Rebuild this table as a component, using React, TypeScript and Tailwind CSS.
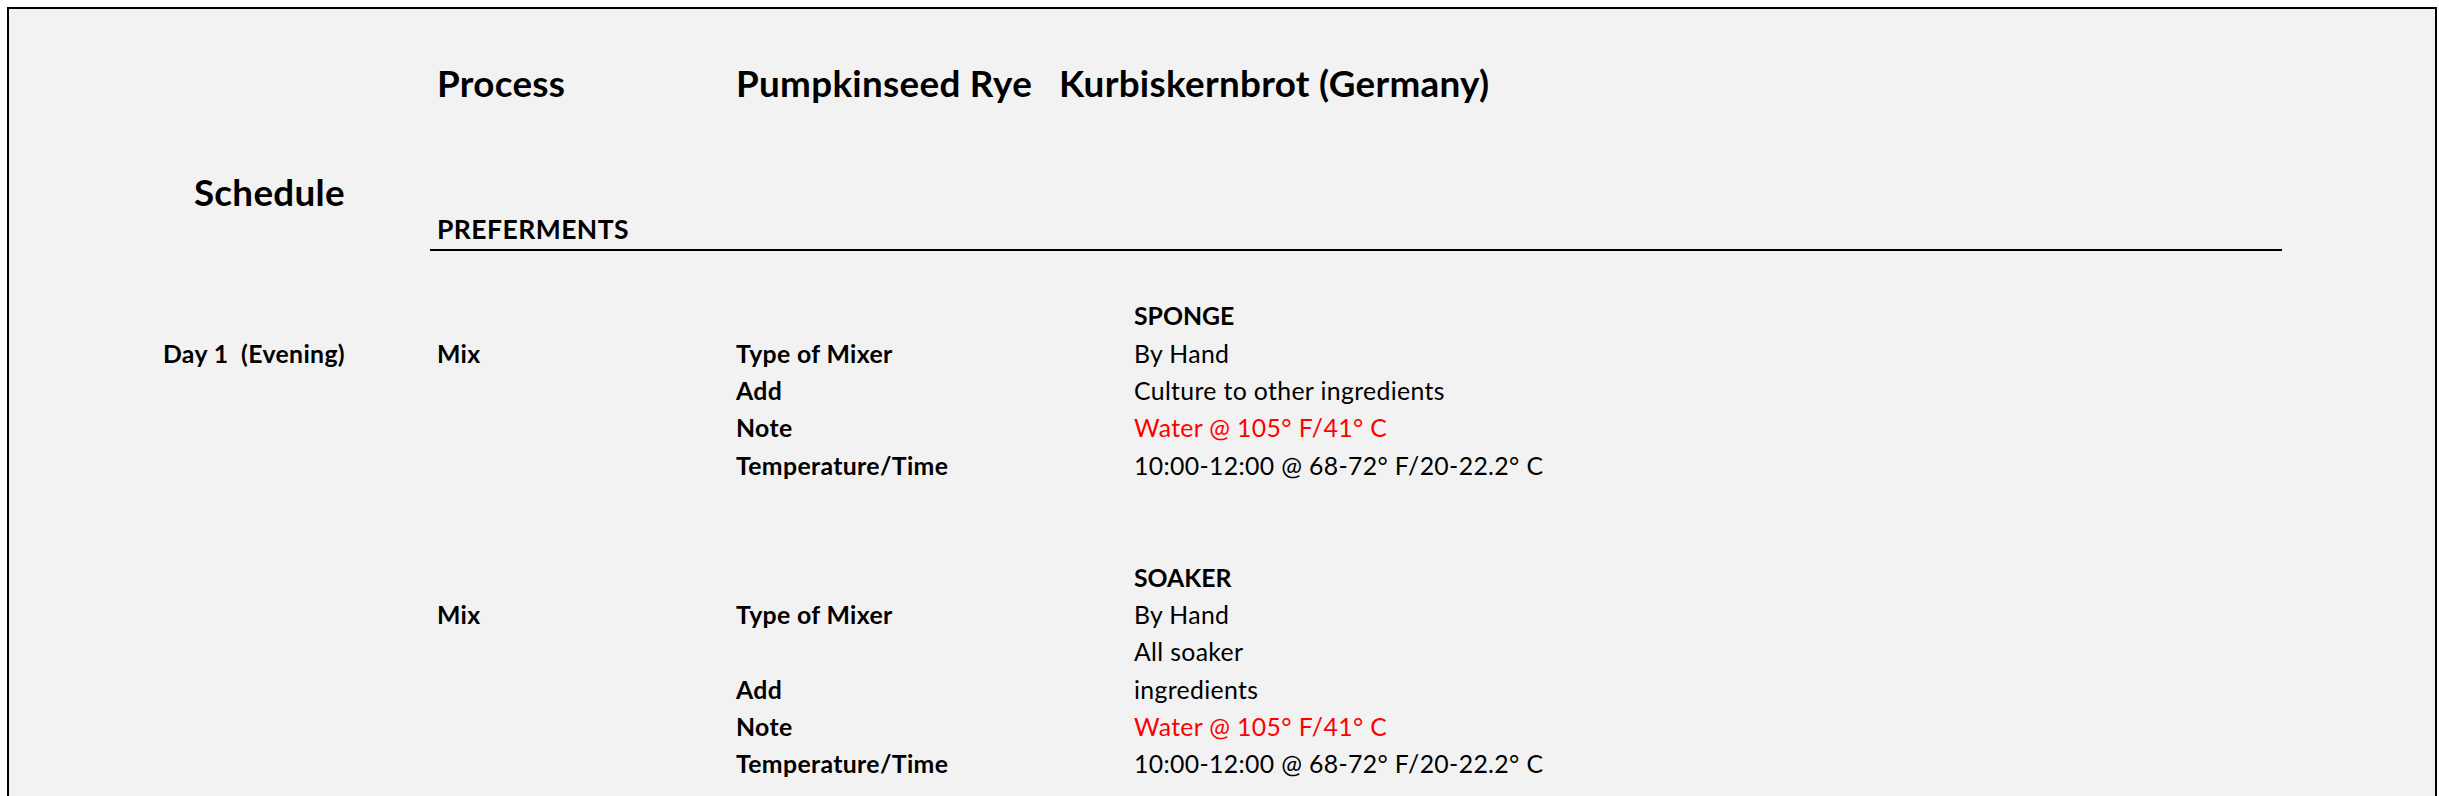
import React from "react";

const ROW = "h-[37.33px] leading-[37.33px] flex items-start";

function Row({
  a,
  b,
  c,
  d,
  dRed,
}: {
  a?: string;
  b?: string;
  c?: string;
  d?: string;
  dRed?: boolean;
}) {
  return (
    <div className={ROW}>
      <div className="w-[342px] shrink-0 pr-[6px] text-right font-bold whitespace-pre">{a}</div>
      <div className="w-[79px] shrink-0" />
      <div className="w-[300px] shrink-0 pl-[7px] font-bold">{b}</div>
      <div className="w-[398px] shrink-0 pl-[6px] font-bold">{c}</div>
      <div className={`flex-1 pl-[6px] whitespace-pre ${dRed ? "text-[#ff0000]" : "text-black"}`}>{d}</div>
    </div>
  );
}

function HeadRow({ d }: { d: string }) {
  return (
    <div className={ROW}>
      <div className="w-[1119px] shrink-0" />
      <div className="flex-1 pl-[6px] font-bold tracking-[0px]">{d}</div>
    </div>
  );
}

export default function App() {
  return (
    <div className="w-[2439px] h-[796px] bg-white pt-[7px] pl-[7px] overflow-hidden font-[Lato,sans-serif] text-black">
      <div className="w-[2430px] h-[800px] border-2 border-b-0 border-black bg-[#f2f2f2] text-[24.8px] tracking-[0.35px]">
        {/* Title row */}
        <div className="h-[110px] pt-[57px] flex text-[36.8px] leading-[35px] tracking-[0.3px] font-bold">
          <div className="w-[421px] shrink-0" />
          <div className="w-[300px] shrink-0 pl-[7px]">Process</div>
          <div className="w-[322px] shrink-0 pl-[6px]">Pumpkinseed Rye</div>
          <div className="pl-[7px] tracking-[0.3px]">Kurbiskernbrot (Germany)</div>
        </div>

        {/* Schedule / Preferments row */}
        <div className="h-[132px] flex">
          <div className="w-[342px] shrink-0 pr-[6px] pt-[56px] text-right text-[36.8px] leading-[35px] tracking-[0.3px] font-bold">
            Schedule
          </div>
          <div className="w-[79px] shrink-0" />
          <div className="w-[1852px] shrink-0 flex flex-col justify-end border-b-2 border-black pb-[8px]">
            <div className="pl-[7px] font-bold text-[26.5px] tracking-[0.45px] leading-[23.3px]">PREFERMENTS</div>
          </div>
        </div>

        <div className="h-[46.33px]" />

        <HeadRow d="SPONGE" />
        <Row a="Day 1  (Evening)" b="Mix" c="Type of Mixer" d="By Hand" />
        <Row c="Add" d="Culture to other ingredients" />
        <Row c="Note" d="Water @ 105° F/41° C" dRed />
        <Row c="Temperature/Time" d="10:00-12:00 @ 68-72° F/20-22.2° C" />
        <Row />
        <Row />
        <HeadRow d="SOAKER" />
        <Row b="Mix" c="Type of Mixer" d="By Hand" />
        <Row d="All soaker" />
        <Row c="Add" d="ingredients" />
        <Row c="Note" d="Water @ 105° F/41° C" dRed />
        <Row c="Temperature/Time" d="10:00-12:00 @ 68-72° F/20-22.2° C" />
        <Row />
      </div>
    </div>
  );
}
